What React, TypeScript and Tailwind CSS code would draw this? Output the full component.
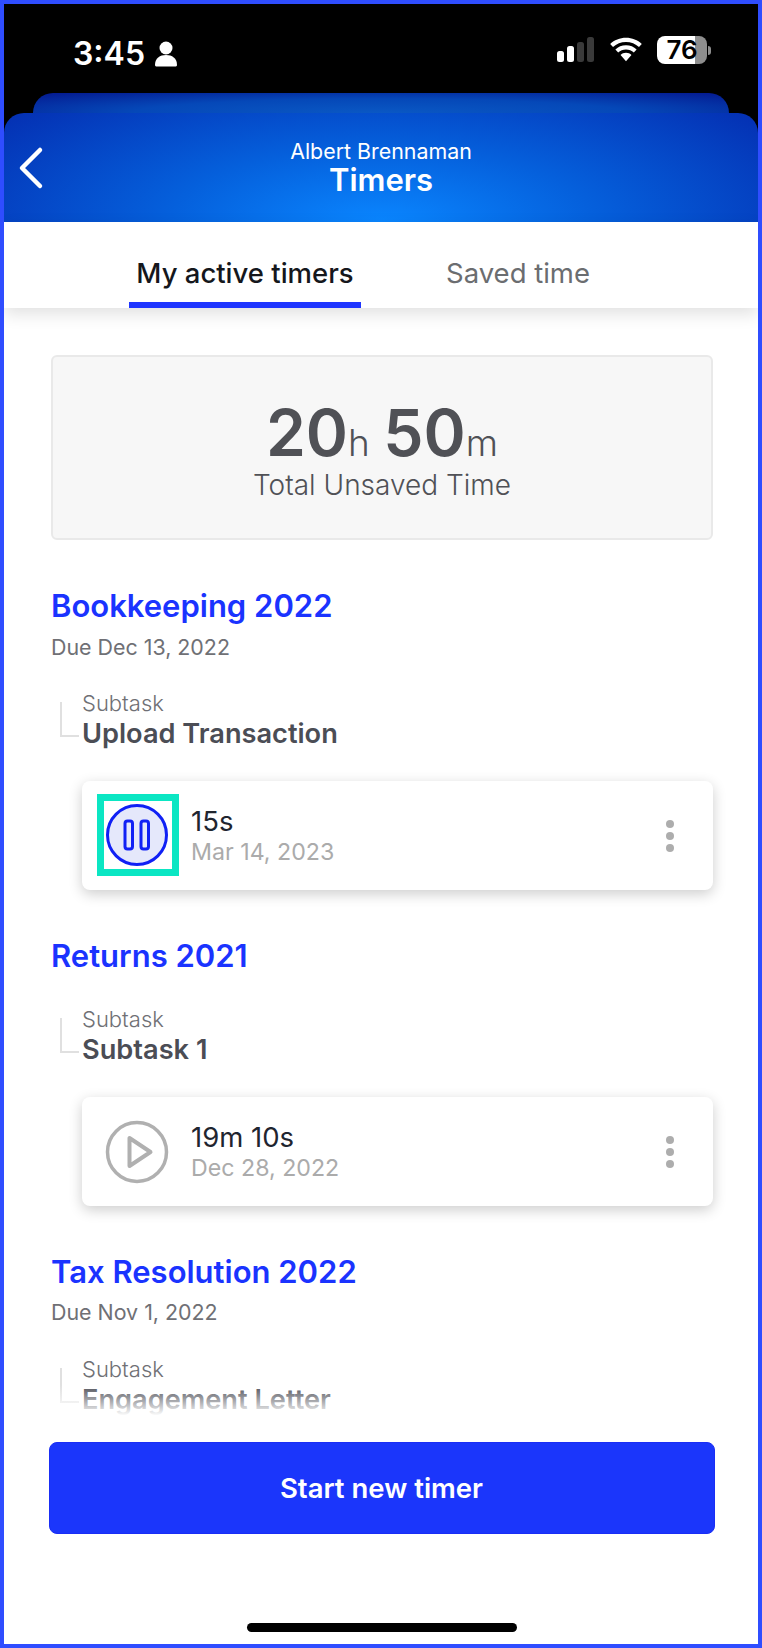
function Subtask({ name }: { name: string }) {
  return (
    <div className="flex pl-[9px]">
      <div className="w-[19px] h-[35px] mt-[13px] border-l-2 border-b-2 border-[#e0e0e0] shrink-0" />
      <div className="pl-[3px]">
        <p className="text-[22px] leading-[29px] text-[#6f7075] font-light">Subtask</p>
        <p className="text-[27.2px] leading-[32px] font-semibold text-[#4b4d55]">{name}</p>
      </div>
    </div>
  );
}

function TimerCard({ time, date, running }: { time: string; date: string; running?: boolean }) {
  return (
    <div className="ml-[31px] h-[109px] rounded-[8px] bg-white shadow-[0_4px_14px_rgba(0,0,0,0.2)] flex items-center pl-[15px] pr-[39px]">
      {running ? (
        <div className="w-[82px] h-[82px] mb-[2px] border-[7px] border-[#0be6c3] flex items-center justify-center pr-[3px] shrink-0">
          <svg width="64" height="64" viewBox="0 0 64 64" fill="none" className="shrink-0">
            <circle cx="32" cy="32" r="29.500" fill="#e5e8fb" stroke="#1020f5" strokeWidth="3" />
            <rect x="20" y="18" width="7.500" height="28" rx="2.500" stroke="#1020f5" strokeWidth="3" />
            <rect x="36" y="18" width="7.500" height="28" rx="2.500" stroke="#1020f5" strokeWidth="3" />
          </svg>
        </div>
      ) : (
        <div className="w-[82px] h-[82px] flex items-center justify-center pr-[3px] shrink-0">
          <svg width="64" height="64" viewBox="0 0 64 64" fill="none" className="shrink-0">
            <circle cx="32" cy="32" r="29.500" stroke="#b0b0b0" strokeWidth="3.500" />
            <path d="M24.500 18v28L45.500 32z" stroke="#b0b0b0" strokeWidth="4" strokeLinejoin="round" />
          </svg>
        </div>
      )}
      <div className="ml-[12px] flex-1">
        <p className="text-[27.5px] leading-[32px] text-[#1f2530]">{time}</p>
        <p className="text-[23.2px] leading-[30px] text-[#ababab]">{date}</p>
      </div>
      <div className="flex flex-col gap-[4px]">
        <span className="w-[8px] h-[8px] rounded-full bg-[#adadad]" />
        <span className="w-[8px] h-[8px] rounded-full bg-[#adadad]" />
        <span className="w-[8px] h-[8px] rounded-full bg-[#adadad]" />
      </div>
    </div>
  );
}

export default function App() {
  return (
    <div className="w-[762px] h-[1648px] border-4 border-[#2f4dff] bg-white flex flex-col overflow-hidden font-['Inter',sans-serif]">
      {/* Status bar */}
      <div className="h-[89px] bg-black shrink-0 flex items-start justify-between pt-[32px] pl-[69px] pr-[47px] text-white">
        <div className="flex items-center gap-[10px]">
          <span className="text-[32px] leading-[36px] font-semibold">3:45</span>
          <svg width="22" height="26" viewBox="0 0 22 26" fill="white">
            <circle cx="11" cy="7" r="6.500" />
            <path d="M0 24c0-7 5-10 11-10s11 3 11 10c0 1-1 1.500-2 1.500H2c-1 0-2-.5-2-1.500z" />
          </svg>
        </div>
        <div className="flex items-center gap-[15px]">
          <svg width="38" height="26" viewBox="0 0 38 26">
            <rect x="0" y="14" width="7" height="11" rx="2.500" fill="white" />
            <rect x="10" y="9" width="7" height="16" rx="2.500" fill="white" />
            <rect x="20" y="5" width="7" height="20" rx="2.500" fill="#3a3a3a" />
            <rect x="30" y="0" width="7" height="25" rx="2.500" fill="#3a3a3a" />
          </svg>
          <svg width="32" height="26" viewBox="0 0 34 26" fill="white">
            <path d="M17 0c6.500 0 12.400 2.500 16.800 6.600l-3 3.200C27.200 6.400 22.300 4.400 17 4.400S6.800 6.400 3.200 9.800L.2 6.600C4.600 2.500 10.500 0 17 0z" />
            <path d="M17 8c4.400 0 8.300 1.600 11.300 4.400l-3 3.200c-2.200-2-5.100-3.200-8.300-3.200s-6.100 1.200-8.300 3.200l-3-3.200C8.700 9.600 12.600 8 17 8z" />
            <path d="M17 16c2.300 0 4.300.9 5.800 2.300L17 25l-5.800-6.700c1.500-1.400 3.500-2.300 5.800-2.300z" />
          </svg>
          <div className="flex items-center">
            <div className="w-[50px] h-[28px] rounded-[8px] bg-[linear-gradient(90deg,#ffffff_76%,#8e8e8e_76%)] flex items-center justify-center text-black text-[26px] leading-none font-semibold">76</div>
            <span className="w-[3px] h-[9px] ml-[1px] rounded-r-[3px] bg-[#8e8e8e]" />
          </div>
        </div>
      </div>

      {/* Header */}
      <div className="bg-black shrink-0">
        <div className="mx-[29px] h-[20px] rounded-t-[20px] bg-[radial-gradient(ellipse_at_50%_100%,#0a58c4_0%,#0548b8_50%,#04188f_100%)]" />
        <div className="h-[109px] rounded-t-[20px] bg-[radial-gradient(ellipse_70%_170%_at_50%_100%,#0a86ff_0%,#0560dc_40%,#0428ac_100%)] flex items-center relative">
          <svg className="absolute left-[11px] top-[33px]" width="30" height="44" viewBox="0 0 30 44" fill="none">
            <path d="M25 4 7 22l18 18" stroke="white" strokeWidth="4.500" strokeLinecap="round" strokeLinejoin="round" />
          </svg>
          <div className="w-full text-center text-white">
            <p className="text-[21.4px] leading-[24px]">Albert Brennaman</p>
            <p className="text-[31px] leading-[33px] font-semibold">Timers</p>
          </div>
        </div>
      </div>

      {/* Tabs */}
      <div className="h-[86px] shrink-0 bg-white flex pl-[125px] shadow-[0_6px_16px_rgba(0,0,0,0.12)] z-10">
        <div className="w-[232px] h-[86px] border-b-[6px] border-[#1f35ff] flex items-center justify-center pt-[24px] text-[27.5px] font-medium text-[#15171c]">My active timers</div>
        <div className="ml-[85px] h-[86px] pb-[6px] pt-[24px] flex items-center text-[27.5px] text-[#6b6d70]">Saved time</div>
      </div>

      {/* Scrolling content */}
      <div className="flex-1 relative overflow-hidden pl-[47px] pr-[45px] pt-[47px]">
        <div className="h-[185px] rounded-[6px] border-2 border-[#e9e9e9] bg-[#f7f7f7] flex flex-col items-center justify-center pt-[12px] text-[#505156]">
          <p className="leading-[54px]">
            <span className="text-[64px] font-semibold">20</span>
            <span className="text-[37px] font-light">h </span>
            <span className="ml-[3px] text-[64px] font-semibold">50</span>
            <span className="text-[37px] font-light">m</span>
          </p>
          <p className="-mt-[8px] text-[28px] leading-[32px] font-light">Total Unsaved Time</p>
        </div>

        <h2 className="mt-[46px] text-[31px] leading-[40px] font-semibold text-[#1a33ff]">Bookkeeping 2022</h2>
        <p className="mt-[7px] text-[21.4px] leading-[28px] text-[#6f7075]">Due Dec 13, 2022</p>
        <div className="mt-[28px]"><Subtask name="Upload Transaction" /></div>
        <div className="mt-[31px]"><TimerCard running time="15s" date="Mar 14, 2023" /></div>

        <h2 className="mt-[46px] text-[31px] leading-[40px] font-semibold text-[#1a33ff]">Returns 2021</h2>
        <div className="mt-[29px]"><Subtask name="Subtask 1" /></div>
        <div className="mt-[31px]"><TimerCard time="19m 10s" date="Dec 28, 2022" /></div>

        <h2 className="mt-[46px] text-[31px] leading-[40px] font-semibold text-[#1a33ff]">Tax Resolution 2022</h2>
        <p className="mt-[6px] text-[21.4px] leading-[28px] text-[#6f7075]">Due Nov 1, 2022</p>
        <div className="mt-[29px]"><Subtask name="Engagement Letter" /></div>

        <div className="absolute left-0 right-0 bottom-0 h-[56px] bg-[linear-gradient(180deg,rgba(255,255,255,0)_0%,#ffffff_55%)]" />
      </div>

      {/* Footer */}
      <div className="h-[203px] shrink-0 bg-white flex flex-col items-center">
        <button className="mt-[1px] ml-[1px] w-[666px] h-[92px] pt-[2px] rounded-[8px] bg-[#1b36fb] border border-[#1a2ef5] text-white text-[27.5px] font-semibold">Start new timer</button>
        <div className="mt-[89px] ml-[2px] w-[270px] h-[9px] rounded-full bg-black" />
      </div>
    </div>
  );
}
